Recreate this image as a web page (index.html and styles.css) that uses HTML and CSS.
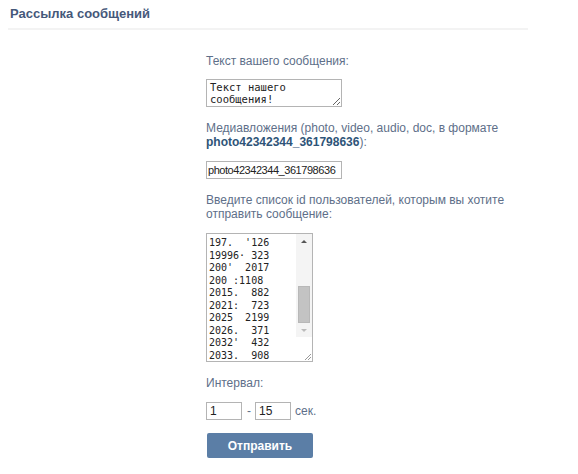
FILE: index.html
```html
<!DOCTYPE html>
<html lang="ru">
<head>
<meta charset="utf-8">
<title>Рассылка сообщений</title>
<link rel="stylesheet" href="styles.css">
</head>
<body>
<div class="page">
  <div class="header">
    <h1 class="title">Рассылка сообщений</h1>
  </div>
  <form class="form">
    <div class="label label-first">Текст вашего сообщения:</div>
    <textarea class="msg">Текст нашего
сообщения!</textarea>
    <div class="label">Медиавложения (photo, video, audio, doc, в формате <b class="link">photo42342344_361798636</b>):</div>
    <input class="media" type="text" value="photo42342344_361798636">
    <div class="label">Введите список id пользователей, которым вы хотите отправить сообщение:</div>
    <div class="idbox">
      <textarea class="ids">197.  '126
19996· 323
200'  2017
200 :1108
2015.  882
2021:  723
2025  2199
2026.  371
2032'  432
2033.  908</textarea>
      <div class="scrollbar">
        <div class="sb-arrow sb-up"></div>
        <div class="sb-track"><div class="sb-thumb"></div></div>
        <div class="sb-arrow sb-down"></div>
        <div class="sb-corner">
          <svg width="10" height="10" viewBox="0 0 10 10"><path d="M9 3 L3 9 M9 6 L6 9" stroke="#999" stroke-width="1" fill="none"/></svg>
        </div>
      </div>
    </div>
    <div class="label">Интервал:</div>
    <div class="interval">
      <input class="num" type="text" value="1">
      <span class="dash">-</span>
      <input class="num" type="text" value="15">
      <span class="unit">сек.</span>
    </div>
    <button class="send" type="button">Отправить</button>
  </form>
</div>
</body>
</html>
```
FILE: styles.css
```css
html, body {
  margin: 0;
  padding: 0;
  background: #ffffff;
}
.page {
  width: 578px;
  height: 474px;
  font-family: "Liberation Sans", Arial, sans-serif;
  font-size: 12px;
}
.header {
  margin: 0 50px 0 8px;
  padding: 7px 0 7px 2px;
  border-bottom: 2px solid #f3f3f3;
}
.title {
  margin: 0;
  font-size: 13px;
  line-height: 14px;
  font-weight: bold;
  color: #45587a;
}
.form {
  display: flex;
  flex-direction: column;
  align-items: flex-start;
  margin-left: 206px;
  width: 300px;
}
.label {
  color: #5e6f89;
  line-height: 14px;
  margin-top: 14px;
  margin-bottom: 12px;
}
.label-first {
  margin-top: 24px;
  margin-bottom: 11px;
}
.link {
  color: #2e5478;
}
textarea, input {
  font: inherit;
  box-sizing: border-box;
  margin: 0;
  outline: none;
}
.msg {
  width: 136px;
  height: 28px;
  border: 1px solid #b4b4b4;
  padding: 1px 3px;
  font-family: "DejaVu Sans Mono", monospace;
  font-size: 10.5px;
  line-height: 12px;
  color: #222;
  resize: both;
  overflow: hidden;
}
.media {
  width: 136px;
  height: 18px;
  border: 1px solid #b4b4b4;
  padding: 0 1px;
  font-size: 11px;
  letter-spacing: -0.45px;
  color: #222;
}
.idbox {
  display: flex;
  width: 107px;
  height: 129px;
  border: 1px solid #b4b4b4;
  box-sizing: border-box;
}
.ids {
  flex: 1;
  border: 0;
  padding: 3px 2px;
  font-family: "DejaVu Sans Mono", monospace;
  font-size: 10px;
  line-height: 12.5px;
  color: #222;
  resize: none;
  overflow: hidden;
  white-space: pre;
}
.scrollbar {
  width: 16px;
  display: flex;
  flex-direction: column;
  background: #f4f4f4;
}
.sb-arrow {
  height: 14px;
  display: flex;
  align-items: center;
  justify-content: center;
}
.sb-up::before {
  content: "";
  border-left: 3px solid transparent;
  border-right: 3px solid transparent;
  border-bottom: 3px solid #555;
}
.sb-down::before {
  content: "";
  border-left: 3px solid transparent;
  border-right: 3px solid transparent;
  border-top: 3px solid #bbb;
}
.sb-track {
  flex: 1;
  display: flex;
  flex-direction: column;
  justify-content: flex-end;
  padding: 0 2px 0 2px;
}
.sb-thumb {
  height: 35px;
  background: #c3c3c3;
  border: 1px solid #b8b8b8;
  margin-bottom: 0;
}
.sb-corner {
  height: 24px;
  background: #ffffff;
  display: flex;
  align-items: flex-end;
  justify-content: flex-end;
}
.interval {
  display: flex;
  align-items: center;
  height: 18px;
}
.num {
  width: 36px;
  height: 18px;
  border: 1px solid #b4b4b4;
  padding: 0 3px;
  font-size: 12px;
  color: #222;
}
.dash {
  color: #5e6f89;
  margin: 0 4px 0 5px;
}
.unit {
  color: #5e6f89;
  margin-left: 4px;
}
.send {
  margin-top: 13px;
  width: 106px;
  height: 25px;
  border: 0;
  border-radius: 2px;
  background: #5b7ea6;
  color: #ffffff;
  font-family: "Liberation Sans", Arial, sans-serif;
  font-size: 12px;
  font-weight: bold;
  cursor: pointer;
  padding: 0;
  margin-left: 1px;
}
```
